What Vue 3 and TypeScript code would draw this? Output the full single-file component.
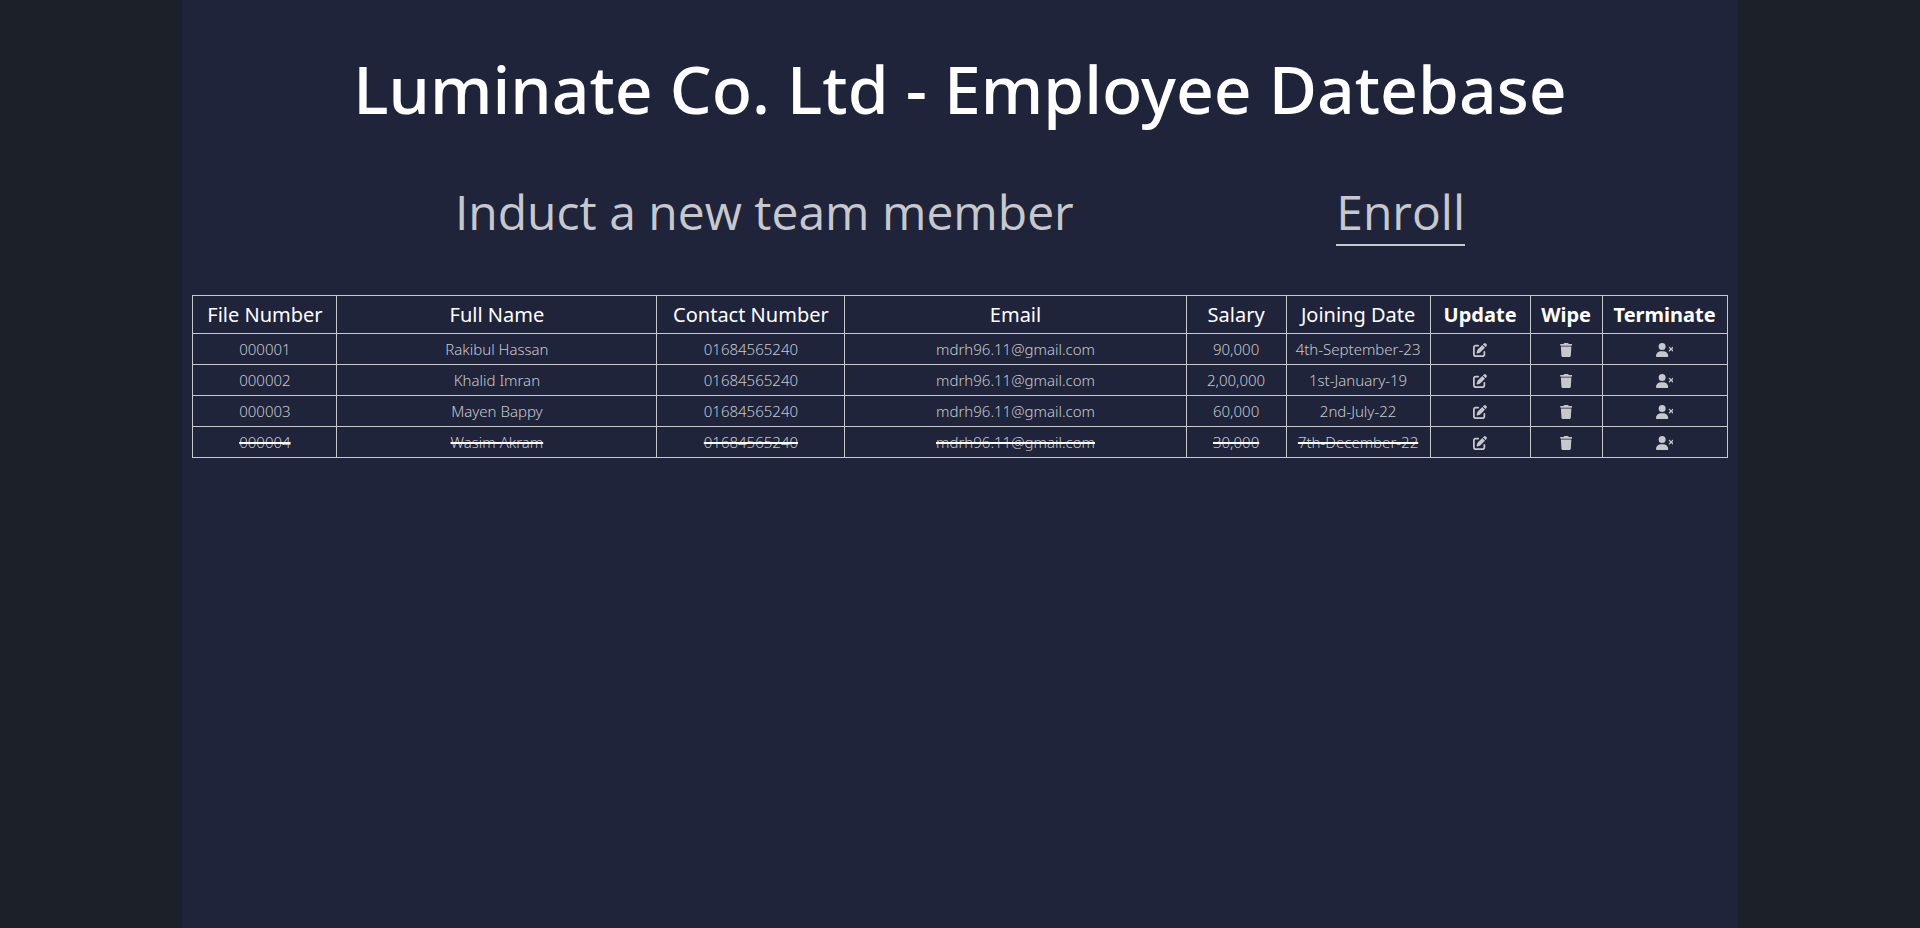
<script setup lang="ts">
interface Employee {
  file: string
  name: string
  contact: string
  email: string
  salary: string
  joined: string
  terminated: boolean
}

const employees: Employee[] = [
  { file: '000001', name: 'Rakibul Hassan', contact: '01684565240', email: 'mdrh96.11@gmail.com', salary: '90,000', joined: '4th-September-23', terminated: false },
  { file: '000002', name: 'Khalid Imran', contact: '01684565240', email: 'mdrh96.11@gmail.com', salary: '2,00,000', joined: '1st-January-19', terminated: false },
  { file: '000003', name: 'Mayen Bappy', contact: '01684565240', email: 'mdrh96.11@gmail.com', salary: '60,000', joined: '2nd-July-22', terminated: false },
  { file: '000004', name: 'Wasim Akram', contact: '01684565240', email: 'mdrh96.11@gmail.com', salary: '30,000', joined: '7th-December-22', terminated: true },
]

const fields = ['file', 'name', 'contact', 'email', 'salary', 'joined'] as const

const columns = [
  { label: 'File Number', cls: 'file' },
  { label: 'Full Name', cls: 'name' },
  { label: 'Contact Number', cls: 'contact' },
  { label: 'Email', cls: 'email' },
  { label: 'Salary', cls: 'salary' },
  { label: 'Joining Date', cls: 'joined' },
  { label: 'Update', cls: 'update action' },
  { label: 'Wipe', cls: 'wipe action' },
  { label: 'Terminate', cls: 'terminate action' },
]

const actions = [
  {
    label: 'Update',
    width: 512,
    path: 'M471.6 21.7c-21.9-21.9-57.3-21.9-79.2 0L362.3 51.7l97.9 97.9 30.1-30.1c21.9-21.9 21.9-57.3 0-79.2L471.6 21.7zm-299.2 220c-6.1 6.1-10.8 13.6-13.5 21.9l-29.6 88.8c-2.9 8.6-.6 18.1 5.8 24.6s15.9 8.7 24.6 5.8l88.8-29.6c8.2-2.7 15.7-7.4 21.9-13.5L437.7 172.3 339.7 74.3 172.4 241.7zM96 64C43 64 0 107 0 160V416c0 53 43 96 96 96H352c53 0 96-43 96-96V320c0-17.7-14.3-32-32-32s-32 14.3-32 32v96c0 17.7-14.3 32-32 32H96c-17.7 0-32-14.3-32-32V160c0-17.7 14.3-32 32-32h96c17.7 0 32-14.3 32-32s-14.3-32-32-32H96z',
  },
  {
    label: 'Wipe',
    width: 448,
    path: 'M135.2 17.7L128 32H32C14.3 32 0 46.3 0 64S14.3 96 32 96H416c17.7 0 32-14.3 32-32s-14.3-32-32-32H320l-7.2-14.3C307.4 6.8 296.3 0 284.2 0H163.8c-12.1 0-23.2 6.8-28.6 17.7zM416 128H32L53.2 467c1.6 25.3 22.6 45 47.9 45H346.9c25.3 0 46.3-19.7 47.9-45L416 128z',
  },
  {
    label: 'Terminate',
    width: 640,
    path: 'M96 128a128 128 0 1 1 256 0A128 128 0 1 1 96 128zM0 482.3C0 383.8 79.8 304 178.3 304h91.4C368.2 304 448 383.8 448 482.3c0 16.4-13.3 29.7-29.7 29.7H29.7C13.3 512 0 498.7 0 482.3zM471 143c9.4-9.4 24.6-9.4 33.9 0l47 47 47-47c9.4-9.4 24.6-9.4 33.9 0s9.4 24.6 0 33.9l-47 47 47 47c9.4 9.4 9.4 24.6 0 33.9s-24.6 9.4-33.9 0l-47-47-47 47c-9.4 9.4-24.6 9.4-33.9 0s-9.4-24.6 0-33.9l47-47-47-47c-9.4-9.4-9.4-24.6 0-33.9z',
  },
]
</script>

<template>
  <main class="page">
    <h1 class="title">Luminate Co. Ltd - Employee Datebase</h1>
    <section class="induct">
      <h2 class="induct-text">Induct a new team member</h2>
      <a class="enroll" href="#enroll">Enroll</a>
    </section>
    <table class="employees">
      <thead>
        <tr>
          <th v-for="col in columns" :key="col.label" :class="col.cls" scope="col">{{ col.label }}</th>
        </tr>
      </thead>
      <tbody>
        <tr v-for="emp in employees" :key="emp.file" :class="{ terminated: emp.terminated }">
          <td v-for="field in fields" :key="field"><span class="value">{{ emp[field] }}</span></td>
          <td v-for="act in actions" :key="act.label">
            <button type="button" class="icon-button" :aria-label="`${act.label} ${emp.name}`">
              <svg class="icon" :viewBox="`0 0 ${act.width} 512`" aria-hidden="true">
                <path :d="act.path" />
              </svg>
            </button>
          </td>
        </tr>
      </tbody>
    </table>
  </main>
</template>

<style>
body {
  margin: 0;
  background: #1c2029;
}
</style>

<style scoped>
.page {
  box-sizing: border-box;
  width: 81%;
  min-height: 100vh;
  margin: 0 auto;
  padding: 38px 10px;
  background: #20243a;
  color: #fff;
  font-family: 'Noto Sans', 'Open Sans', sans-serif;
}

.title {
  margin: 0;
  font-size: 66px;
  font-weight: 500;
  line-height: 100px;
  text-align: center;
}

.induct {
  display: flex;
  justify-content: space-evenly;
  align-items: baseline;
  margin: 42px 0 49px;
  color: #c7c8ce;
  font-family: 'Open Sans', 'Noto Sans', sans-serif;
  font-size: 48px;
  font-weight: 500;
  line-height: 64px;
}

.induct-text {
  margin: 0;
  font-size: inherit;
  font-weight: inherit;
}

.enroll {
  border-bottom: 2px solid #c7c8ce;
  color: inherit;
  text-decoration: none;
}

.employees {
  width: 100%;
  table-layout: fixed;
  border-collapse: collapse;
  text-align: center;
}

th,
td {
  box-sizing: border-box;
  padding: 0;
  border: 1px solid #c7c8ce;
}

th {
  height: 38px;
  font-size: 20px;
  font-weight: 400;
  line-height: 28px;
  white-space: nowrap;
}

th.action {
  font-weight: 700;
}

td {
  height: 31px;
  color: #c7c8ce;
  font-size: 15px;
  font-weight: 300;
  line-height: 20px;
}

.file,
.joined {
  width: 144px;
}

.name {
  width: 320px;
}

.contact {
  width: 188px;
}

.salary,
.update {
  width: 100px;
}

.wipe {
  width: 72px;
}

.terminate {
  width: 125px;
}

.terminated .value {
  text-decoration: line-through 2px #fff;
}

.icon-button {
  display: block;
  margin: 0 auto;
  padding: 2px 0 0;
  border: 0;
  background: none;
  color: inherit;
  cursor: pointer;
}

.icon {
  display: block;
  height: 14px;
  fill: currentColor;
}
</style>
